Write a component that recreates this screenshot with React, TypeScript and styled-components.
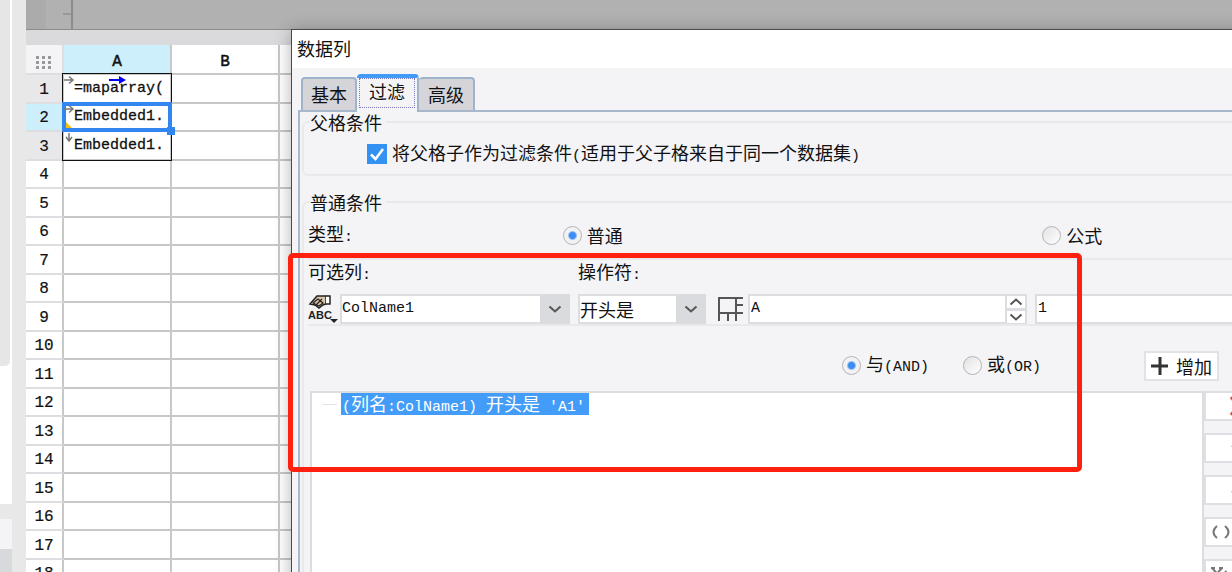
import React from "react";
import styled, { createGlobalStyle, css } from "styled-components";

const cjk = `"Noto Sans CJK SC", sans-serif`;
const mono = `"Liberation Mono", "Noto Sans CJK SC", monospace`;

const GlobalStyle = createGlobalStyle`
  *, *::before, *::after { box-sizing: border-box; }
  body { margin: 0; overflow: hidden; font: 18px/24px ${cjk}; color: #111; }
  button, input, select { font: inherit; color: inherit; }
`;

const Page = styled.div`
  position: relative;
  display: flex;
  height: 100vh;
  overflow: hidden;
  background: #e8e8e8;
`;

const Side = styled.aside`
  flex: none;
  display: flex;
  flex-direction: column;
  width: 12px;
  margin-right: 14px;
  background: #fff;
`;
const SideThumb = styled.div`
  width: 10px;
  height: 366px;
  background: #e6e6e6;
  border-bottom-right-radius: 5px;
`;
const SideGap = styled.div`
  height: 15px;
  margin-top: 138px;
  background: #e8e8e8;
`;
const SideHead = styled.div`
  height: 30px;
  background: #f4f4f7;
`;
const SideFoot = styled.div`
  flex: 1;
  background: #d8d9dd;
`;

const Main = styled.main`
  flex: 1;
  min-width: 0;
`;
const Ruler = styled.div`
  display: flex;
  height: 30px;
  background: #b1b1b1;
  border-bottom: 1px solid #8c8c8c;
`;
const RulerCorner = styled.div`
  width: 20px;
  background: #ababab;
`;
const RulerScale = styled.div`
  display: flex;
  justify-content: flex-end;
  width: 27px;
  padding-top: 13px;
  border-right: 2px solid #8c8c8c;
`;
const RulerTick = styled.div`
  width: 8px;
  height: 2px;
  background: #999;
`;
const Band = styled.div`
  height: 15px;
  background: #dadadd;
`;

const Sheet = styled.table`
  width: 100%;
  table-layout: fixed;
  border-collapse: separate;
  border-spacing: 0;
  background: #fff;
  font: 16px/20px ${mono};
`;
const SheetRow = styled.tr<{ $size: number }>`
  height: ${(p) => p.$size}px;
`;
const HeadCell = styled.th<{ $tone?: "active" | "soft"; $column?: boolean }>`
  padding: ${(p) => (p.$column ? "6px 0 0" : "2px 0 0")};
  border: solid;
  border-color: #c8c8c8 #c8c8c8 ${(p) => (p.$column ? "#c8c8c8" : "#dedee2")};
  border-width: 0 2px 2px 0;
  background: ${(p) => (p.$tone === "active" ? "#cdeffb" : p.$tone === "soft" ? "#e8e8ea" : "#fff")};
  font-weight: 400;
  -webkit-text-stroke: ${(p) => (p.$column ? "0.5px" : "0.2px")} #111;
  & svg { display: block; margin: 0 auto; }
`;
const CornerCell = styled(HeadCell)`
  background: #f4f4f6;
  border-color: #dedee2;
`;
const Cell = styled.td<{ $mark?: "box" | "selected" }>`
  position: relative;
  padding: 0 0 0 10px;
  border: solid #c8c8c8;
  border-width: 0 2px 2px 0;
  font-size: 15px;
  white-space: nowrap;
  ${(p) =>
    p.$mark &&
    css`
      -webkit-text-stroke: 0.3px #111;
      &::after {
        content: "";
        position: absolute;
        inset: -2px;
        border: ${p.$mark === "selected" ? "4px solid #3385f0" : "1px solid #111"};
        z-index: ${p.$mark === "selected" ? 2 : 1};
      }
    `}
`;
const CellMark = styled.svg`
  position: absolute;
  left: 0;
  top: 0;
  z-index: 3;
`;
const FillHandle = styled.span`
  position: absolute;
  right: -5px;
  bottom: -5px;
  z-index: 4;
  width: 8px;
  height: 8px;
  background: #3385f0;
`;

const Dialog = styled.section`
  position: absolute;
  left: 291px;
  right: -101px;
  top: 29px;
  bottom: -200px;
  z-index: 5;
  border: 1px solid #4a4a4a;
  background: #f4f4f7;
  box-shadow: 0 2px 16px rgba(0, 0, 0, 0.3);
`;
const TitleBar = styled.h1`
  height: 38px;
  margin: 0;
  padding: 6px 5px;
  background: #fff;
  font-size: 18px;
  font-weight: 400;
  line-height: 24px;
`;
const Tabs = styled.div`
  display: flex;
  align-items: flex-end;
  height: 42px;
  padding-left: 9px;
`;
const Tab = styled.button<{ $active?: boolean }>`
  height: 33px;
  width: 56px;
  padding: 0 0 2px;
  border: 2px solid #9fb3ca;
  border-bottom: 0;
  border-radius: 4px 4px 0 0;
  background: #d4d4d9;
  line-height: 24px;
  & + & { border-left: 0; }
  ${(p) =>
    p.$active &&
    css`
      z-index: 1;
      width: 62px;
      height: 38px;
      margin-bottom: -2px;
      padding: 0 2px 4px;
      border: 0;
      border-top: 4px solid #4199f8;
      border-right: 2px solid #9fb3ca;
      background: #f4f4f7;
      & > span { display: block; height: 30px; border: 1px dotted #7a78b8; }
    `}
`;
const Panel = styled.div`
  margin: 0 6px;
  padding: 0 4px 0 2px;
  height: 680px;
  border: 2px solid #a8b8cc;
`;
const Group = styled.fieldset<{ $tall?: boolean }>`
  min-width: 0;
  height: ${(p) => (p.$tall ? "600px" : "64px")};
  margin: 0 0 16px;
  padding: 0 4px;
  border: 2px solid #e9e9ec;
  border-radius: 6px;
`;
const Legend = styled.legend`
  margin-left: 2px;
  padding: 0 4px 0 0;
  line-height: 20px;
`;
const Check = styled.label`
  display: flex;
  align-items: center;
  gap: 5px;
  height: 44px;
  padding-left: 59px;
`;
const CheckBox = styled.input`
  appearance: none;
  width: 20px;
  height: 20px;
  margin: 0;
  background: #3391f2;
`;
const CheckWrap = styled.span`
  position: relative;
  display: flex;
  & svg { position: absolute; left: 0; top: 0; pointer-events: none; }
`;
const Latin = styled.span`
  font-family: ${mono};
  font-size: 15px;
`;
const TypeRow = styled.div`
  display: grid;
  grid-template-columns: 255fr 480fr 272fr;
  align-items: center;
  height: 46px;
`;
const Choice = styled.label`
  display: flex;
  align-items: center;
  gap: 5px;
`;
const Radio = styled.input`
  appearance: none;
  width: 19px;
  height: 19px;
  margin: 0;
  border: 1px solid #b4b4b6;
  border-radius: 50%;
  background: linear-gradient(135deg, #e2e2e2, #fff);
  &:checked { background: radial-gradient(circle, #3d8df5 3px, #f2f2f3 5px); }
`;
const Criteria = styled.div`
  display: grid;
  grid-template-columns: 32px 230px 8px 128px 12px 26px 4px minmax(0, 1fr) 8px minmax(0, 1fr);
  grid-template-rows: 34px 30px;
  align-items: center;
  height: 68px;
  border: solid #e9e9ec;
  border-width: 2px 0;
`;
const FieldLabel = styled.label<{ $col: string }>`
  grid-column: ${(p) => p.$col};
  grid-row: 1;
  line-height: 22px;
  align-self: start;
`;
const Slot = styled.div<{ $col: number }>`
  position: relative;
  grid-column: ${(p) => p.$col};
  grid-row: 2;
  display: flex;
  min-width: 0;
  height: 30px;
`;
const Select = styled.select<{ $latin?: boolean }>`
  appearance: none;
  width: 100%;
  height: 30px;
  padding: 0 30px 0 0;
  border: 2px solid #dcdde0;
  border-radius: 0;
  background: #fff;
  ${(p) => p.$latin && css`font: 15px/24px ${mono};`}
`;
const SelectArrow = styled.span`
  position: absolute;
  right: 0;
  top: 0;
  display: flex;
  align-items: center;
  justify-content: center;
  width: 30px;
  height: 30px;
  background: #dadbdf;
  pointer-events: none;
`;
const TextBox = styled.input`
  flex: 1;
  min-width: 0;
  height: 30px;
  padding: 0 1px 2px;
  border: 2px solid #dcdde0;
  background: #fff;
  font: 15px/24px ${mono};
`;
const Stepper = styled.div`
  display: flex;
  flex-direction: column;
  width: 20px;
`;
const StepButton = styled.button`
  display: flex;
  align-items: center;
  justify-content: center;
  height: 15px;
  padding: 0;
  border: solid #dcdde0;
  border-width: 2px 2px 1px 0;
  background: #fff;
`;
const IconButton = styled.button`
  display: flex;
  padding: 0;
  border: 0;
  background: none;
`;
const LogicRow = styled.div`
  display: flex;
  align-items: center;
  justify-content: flex-end;
  height: 65px;
  padding: 14px 95px 0 0;
  & > label + label { margin-left: 34px; }
`;
const AddButton = styled.button`
  display: flex;
  align-items: center;
  gap: 8px;
  width: 75px;
  height: 30px;
  margin-left: 103px;
  padding: 0 5px;
  border: 2px solid #e2e2e5;
  background: #fff;
  white-space: nowrap;
`;
const TreeArea = styled.div`
  display: flex;
  height: 400px;
  padding-left: 2px;
`;
const Tree = styled.ul`
  flex: 1;
  margin: 0;
  padding: 0 0 0 10px;
  border: 2px solid #dcdde1;
  background: #fff;
  list-style: none;
`;
const TreeItem = styled.li`
  display: flex;
  align-items: center;
  height: 22px;
  &::before { content: ""; width: 15px; height: 1px; margin-right: 4px; background: #e4e4e4; }
`;
const Selected = styled.span`
  height: 22px;
  padding: 0 4px 0 1px;
  background: #449cf9;
  color: #fff;
  line-height: 20px;
  white-space: pre;
`;
const Tools = styled.div`
  display: flex;
  flex-direction: column;
  gap: 12px;
  width: 110px;
`;
const ToolButton = styled.button<{ $inset?: number }>`
  display: flex;
  align-items: center;
  height: 30px;
  padding: 0 0 0 ${(p) => p.$inset ?? 24}px;
  border: 2px solid #dfdfe3;
  background: #fff;
`;

const Annotation = styled.div`
  position: absolute;
  left: 288px;
  top: 253px;
  z-index: 10;
  width: 794px;
  height: 219px;
  border: 5px solid #ff2010;
  border-radius: 5px;
  pointer-events: none;
`;

const Chevron = ({ up }: { up?: boolean }) => (
  <svg width="14" height="8" viewBox="0 0 14 8" fill="none" stroke="#555" strokeWidth="2">
    <path d={up ? "M1.5 6.5 7 1.5l5.5 5" : "M1.5 1.5 7 6.5l5.5-5"} />
  </svg>
);

const Arrow = ({ down }: { down?: boolean }) => (
  <CellMark width="11" height="12" viewBox="0 0 11 12" fill="none" stroke="#777" strokeWidth="1.5">
    {down ? <path d="M5 1v8M2 5l3 4 3-4" /> : <path d="M0 5h9M5 1.5 9 5 5 8.5" />}
  </CellMark>
);

const contents: Record<number, string> = { 1: "=maparray(", 2: "Embedded1.", 3: "Embedded1." };
const rows = Array.from({ length: 18 }, (_, i) => i + 1);

function Spreadsheet() {
  return (
    <Sheet>
      <colgroup>
        <col style={{ width: 38 }} />
        <col style={{ width: 108 }} />
        <col style={{ width: 108 }} />
        <col />
      </colgroup>
      <thead>
        <SheetRow $size={30}>
          <CornerCell $column>
            <svg width="16" height="13" viewBox="0 0 16 13" fill="#999">
              {[0, 6, 12].map((x) => [0, 5, 10].map((y) => <rect key={`${x}-${y}`} x={x} y={y} width="3" height="3" />))}
            </svg>
          </CornerCell>
          <HeadCell $column $tone="active">A</HeadCell>
          <HeadCell $column>B</HeadCell>
          <HeadCell $column />
        </SheetRow>
      </thead>
      <tbody>
        {rows.map((n) => (
          <SheetRow key={n} $size={n % 2 === 1 ? 29 : 28}>
            <HeadCell $tone={n === 2 ? "active" : n < 4 ? "soft" : undefined}>{n}</HeadCell>
            <Cell $mark={n === 2 ? "selected" : n < 4 ? "box" : undefined}>
              {contents[n]}
              {n < 4 && <Arrow down={n === 3} />}
              {n === 1 && (
                <CellMark width="64" height="12" viewBox="0 0 64 12">
                  <path d="M45 4h10v-3l7 4-7 4v-3H45z" fill="#0000ff" />
                </CellMark>
              )}
              {n === 2 && (
                <CellMark width="8" height="26" viewBox="0 0 8 26">
                  <path d="M2 18l6 6H2z" fill="#f7bd0b" />
                </CellMark>
              )}
              {n === 2 && <FillHandle />}
            </Cell>
            <Cell />
            <Cell />
          </SheetRow>
        ))}
      </tbody>
    </Sheet>
  );
}

export default function App() {
  return (
    <Page>
      <GlobalStyle />
      <Side>
        <SideThumb />
        <SideGap />
        <SideHead />
        <SideFoot />
      </Side>
      <Main>
        <Ruler>
          <RulerCorner />
          <RulerScale><RulerTick /></RulerScale>
        </Ruler>
        <Band />
        <Spreadsheet />
      </Main>

      <Dialog>
        <TitleBar>数据列</TitleBar>
        <Tabs>
          <Tab>基本</Tab>
          <Tab $active><span>过滤</span></Tab>
          <Tab>高级</Tab>
        </Tabs>
        <Panel>
          <Group>
            <Legend>父格条件</Legend>
            <Check>
              <CheckWrap>
                <CheckBox type="checkbox" defaultChecked />
                <svg width="20" height="20" fill="none" stroke="#fff" strokeWidth="2.5">
                  <path d="M4 10.5 8.5 15 16 5" />
                </svg>
              </CheckWrap>
              <span>将父格子作为过滤条件<Latin>(</Latin>适用于父子格来自于同一个数据集<Latin>)</Latin></span>
            </Check>
          </Group>
          <Group $tall>
            <Legend>普通条件</Legend>
            <TypeRow>
              <span>类型<Latin>:</Latin></span>
              <Choice><Radio type="radio" name="kind" defaultChecked />普通</Choice>
              <Choice><Radio type="radio" name="kind" />公式</Choice>
            </TypeRow>
            <Criteria>
              <FieldLabel $col="1 / 3" htmlFor="column">可选列<Latin>:</Latin></FieldLabel>
              <FieldLabel $col="4 / 8" htmlFor="operator">操作符<Latin>:</Latin></FieldLabel>
              <Slot $col={1}>
                <IconButton aria-label="ABC">
                  <svg width="30" height="30" viewBox="0 0 30 30" fill="none" stroke="#222" strokeWidth="1.5">
                    <path d="M2 10 9 2h9v8l-3 1-4 3-4-3z" fill="#d9c6a8" />
                    <path d="M18 2h4v8h-4" fill="#fff" />
                    <path d="M5 9l5-4 5 4-4 3zM8 11l6-6" strokeWidth="1.2" />
                    <text x="0" y="25" fill="#222" stroke="none" fontFamily="Liberation Sans" fontWeight="700" fontSize="11">ABC</text>
                    <path d="M22 25h8l-4 4z" fill="#222" stroke="none" />
                  </svg>
                </IconButton>
              </Slot>
              <Slot $col={2}>
                <Select id="column" $latin><option>ColName1</option></Select>
                <SelectArrow><Chevron /></SelectArrow>
              </Slot>
              <Slot $col={4}>
                <Select id="operator"><option>开头是</option></Select>
                <SelectArrow><Chevron /></SelectArrow>
              </Slot>
              <Slot $col={6}>
                <IconButton aria-label="A1">
                  <svg width="26" height="30" viewBox="0 0 26 30" fill="none" stroke="#555" strokeWidth="2">
                    <path d="M1 27V4h24M18 4v23M1 19h24M18 11h7M10 19v8" />
                  </svg>
                </IconButton>
              </Slot>
              <Slot $col={8}>
                <TextBox aria-label="A" defaultValue="A" />
                <Stepper>
                  <StepButton aria-label="+"><Chevron up /></StepButton>
                  <StepButton aria-label="-"><Chevron /></StepButton>
                </Stepper>
              </Slot>
              <Slot $col={10}><TextBox aria-label="1" defaultValue="1" /></Slot>
            </Criteria>
            <LogicRow>
              <Choice><Radio type="radio" name="logic" defaultChecked /><span>与<Latin>(AND)</Latin></span></Choice>
              <Choice><Radio type="radio" name="logic" /><span>或<Latin>(OR)</Latin></span></Choice>
              <AddButton>
                <svg width="18" height="18" stroke="#333" strokeWidth="3"><path d="M0 9h18M9 0v18" /></svg>
                增加
              </AddButton>
            </LogicRow>
            <TreeArea>
              <Tree>
                <TreeItem>
                  <Selected>
                    <Latin>(</Latin>列名<Latin>:ColName1) </Latin>开头是<Latin> 'A1'</Latin>
                  </Selected>
                </TreeItem>
              </Tree>
              <Tools>
                <ToolButton aria-label="x">
                  <svg width="16" height="20" stroke="#e8483c" strokeWidth="3"><path d="M1 1l14 18M15 1 1 19" /></svg>
                </ToolButton>
                <ToolButton aria-label="up">
                  <svg width="16" height="18" fill="none" stroke="#888" strokeWidth="2"><path d="M2 8l6-6 6 6M8 2v15" /></svg>
                </ToolButton>
                <ToolButton aria-label="down">
                  <svg width="16" height="18" fill="none" stroke="#888" strokeWidth="2"><path d="M2 10l6 6 6-6M8 1v15" /></svg>
                </ToolButton>
                <ToolButton aria-label="()" $inset={5}>
                  <svg width="20" height="16" fill="none" stroke="#777" strokeWidth="2"><path d="M6 2Q-1 8 6 14M14 2q7 6 0 12" /></svg>
                </ToolButton>
                <ToolButton aria-label=")(" $inset={4}>
                  <svg width="22" height="18" fill="none" stroke="#777" strokeWidth="2"><path d="M2 3l10 11M12 3 2 14M1 3h4M9 3h4M15 6q5 5 0 10" /></svg>
                </ToolButton>
              </Tools>
            </TreeArea>
          </Group>
        </Panel>
      </Dialog>
      <Annotation />
    </Page>
  );
}
